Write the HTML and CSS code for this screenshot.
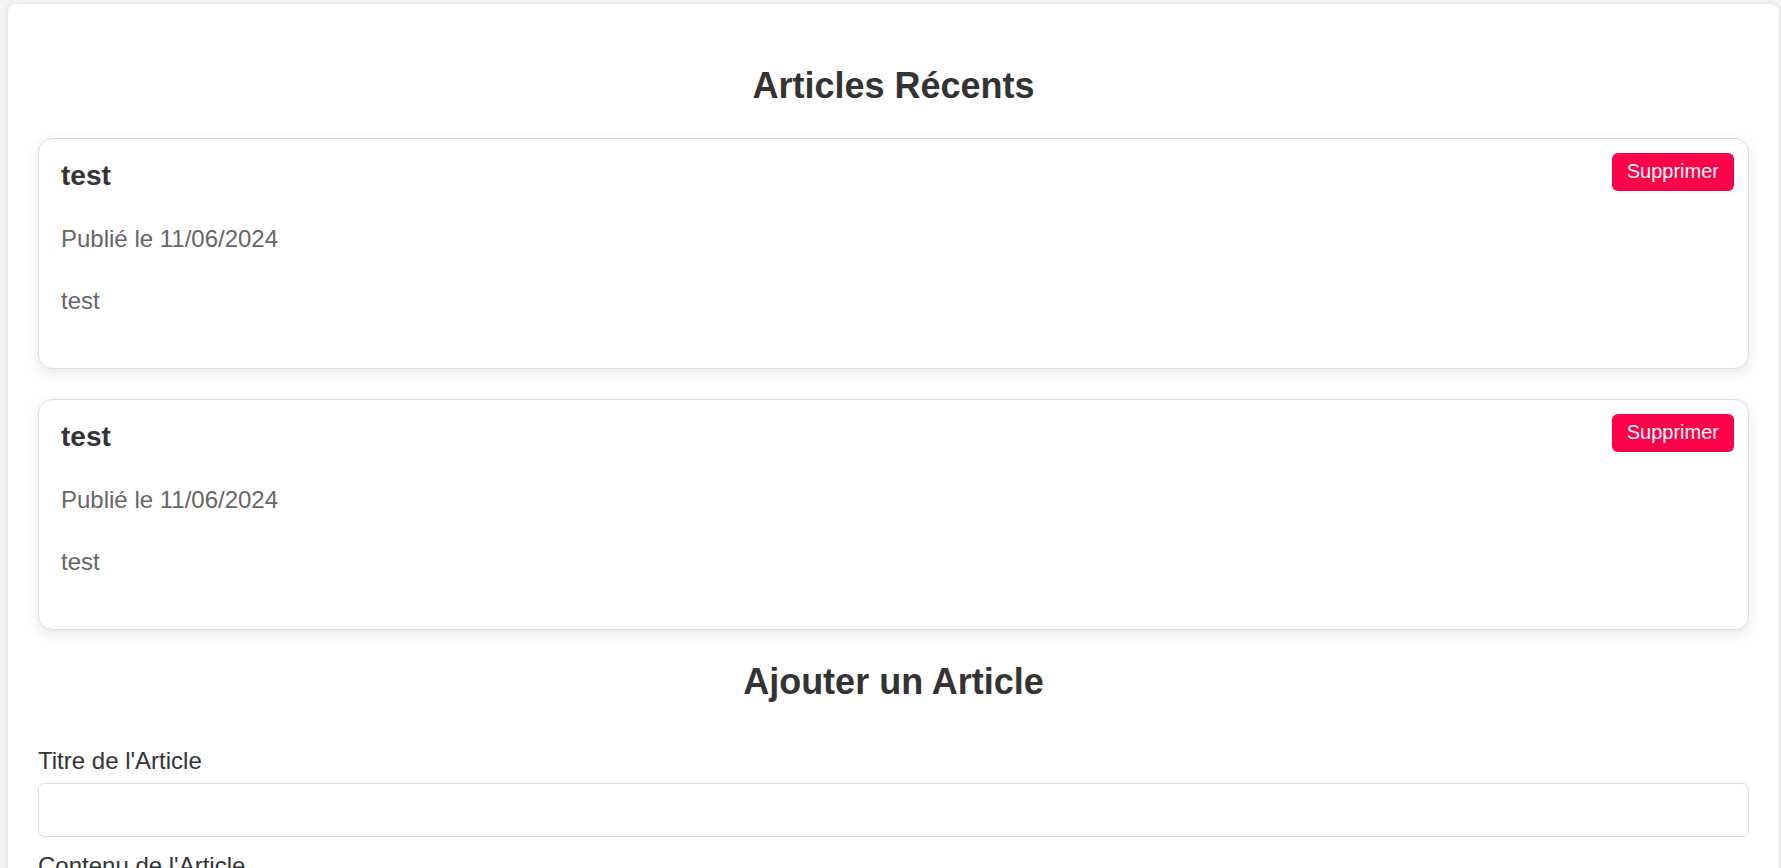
FILE: index.html
```html
<!DOCTYPE html>
<html lang="fr">
<head>
<meta charset="utf-8">
<title>Articles</title>
<link rel="stylesheet" href="styles.css">
</head>
<body>
<div class="container">
  <h2 class="section-title">Articles Récents</h2>
  <div class="articles">
    <div class="article">
      <h3 class="article-title">test</h3>
      <p class="article-date">Publié le 11/06/2024</p>
      <p class="article-body">test</p>
      <button class="btn-delete">Supprimer</button>
    </div>
    <div class="article">
      <h3 class="article-title">test</h3>
      <p class="article-date">Publié le 11/06/2024</p>
      <p class="article-body">test</p>
      <button class="btn-delete">Supprimer</button>
    </div>
  </div>
  <h2 class="section-title">Ajouter un Article</h2>
  <form class="article-form">
    <label class="field-label" for="titre">Titre de l'Article</label>
    <input class="field-input" id="titre" type="text">
    <label class="field-label" for="contenu">Contenu de l'Article</label>
    <textarea class="field-textarea" id="contenu"></textarea>
    <button class="btn-submit" type="button">Ajouter l'Article</button>
  </form>
</div>
</body>
</html>
```

FILE: styles.css
```css
html, body {
  margin: 0;
  background: #f4f4f4;
}
body {
  padding: 4px 2px 0 8px;
  font-family: "Liberation Sans", Arial, sans-serif;
  font-size: 24px;
  color: #333;
}
.container {
  background: #fff;
  border-radius: 8px;
  box-shadow: 0 0 6px rgba(0, 0, 0, 0.12);
  padding: 30px 30px 40px;
}
.section-title {
  font-size: 36px;
  font-weight: bold;
  text-align: center;
  color: #333;
  margin: 31px 0;
  line-height: normal;
}
.article {
  position: relative;
  border: 1px solid #ddd;
  border-radius: 14px;
  padding: 21px 22px 23px;
  margin-bottom: 30px;
  box-shadow: 0 4px 12px rgba(0, 0, 0, 0.1);
  background: #fff;
}
.article-title {
  font-size: 28px;
  font-weight: bold;
  color: #333;
  margin: 0 0 28px;
  line-height: normal;
}
.article-date,
.article-body {
  margin: 0 0 24px;
  line-height: 1.6;
  color: #666;
}
.btn-delete {
  position: absolute;
  top: 14px;
  right: 14px;
  background: #ff0048;
  color: #fff;
  border: none;
  border-radius: 6px;
  font-family: "Liberation Sans", Arial, sans-serif;
  font-size: 20px;
  padding: 7px 15px 8px;
  line-height: normal;
  cursor: pointer;
}
.article-form {
  padding-top: 13px;
}
.field-label {
  display: block;
  line-height: normal;
  margin-bottom: 8px;
  color: #333;
}
.field-input,
.field-textarea {
  display: block;
  box-sizing: border-box;
  width: 100%;
  border: 1px solid #ddd;
  border-radius: 6px;
  margin: 0 0 15px;
  font-family: "Liberation Sans", Arial, sans-serif;
  font-size: 20px;
}
.field-input {
  height: 54px;
  padding: 0 15px;
}
.field-textarea {
  height: 150px;
  padding: 15px;
  resize: vertical;
}
.btn-submit {
  background: #ff0048;
  color: #fff;
  border: none;
  border-radius: 6px;
  font-family: "Liberation Sans", Arial, sans-serif;
  font-size: 20px;
  padding: 12px 22px;
}
```
